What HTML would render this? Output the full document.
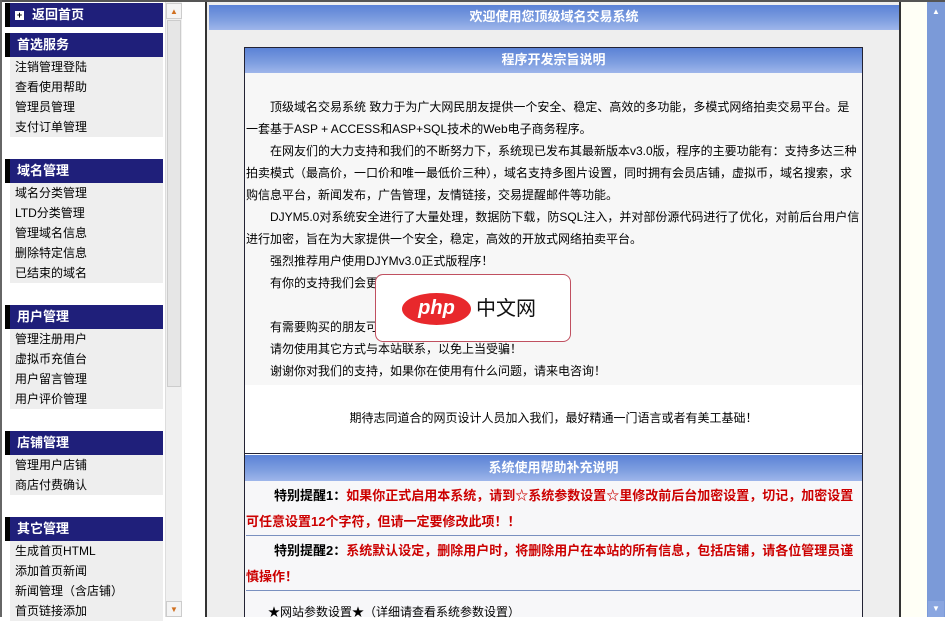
<!DOCTYPE html>
<html><head><meta charset="utf-8"><style>
*{margin:0;padding:0;box-sizing:border-box}
body{width:945px;height:617px;overflow:hidden;background:#fff;font-family:"Liberation Sans","Noto Sans CJK SC","WenQuanYi Zen Hei",sans-serif;font-size:12px;color:#000;position:relative}
.a{position:absolute}
.hd{position:absolute;left:5px;width:158px;height:24px;background:#1f1f7a;border-left:5px solid #000;color:#fff;font-weight:bold;font-size:13px;line-height:24px;padding-left:7px}
.it{position:absolute;left:10px;width:153px;background:#eeeeee;padding-left:5px}
.it div{height:20px;line-height:20px}
.grad{background:linear-gradient(#5b82d6,#7f9fe0 60%,#9fb6ea)}
.sb{position:absolute;width:16px;height:16px;font-size:8px;text-align:center;line-height:16px}
p{height:22px;line-height:22px;white-space:nowrap;overflow:hidden}
</style></head><body>
<div class="a" style="left:0;top:0;width:945px;height:2px;background:#555"></div>
<div class="a" style="left:0;top:0;width:2px;height:617px;background:#666"></div>
<div class="hd" style="top:3px;height:24px;padding-left:5px"><span style="display:inline-block;width:9px;height:9px;background:#fff;color:#000;font-size:9px;line-height:8px;text-align:center;margin-right:8px;vertical-align:1px">+</span>返回首页</div>
<div class="hd" style="top:33px">首选服务</div>
<div class="it" style="top:57px"><div>注销管理登陆</div><div>查看使用帮助</div><div>管理员管理</div><div>支付订单管理</div></div>
<div class="hd" style="top:159px">域名管理</div>
<div class="it" style="top:183px"><div>域名分类管理</div><div>LTD分类管理</div><div>管理域名信息</div><div>删除特定信息</div><div>已结束的域名</div></div>
<div class="hd" style="top:305px">用户管理</div>
<div class="it" style="top:329px"><div>管理注册用户</div><div>虚拟币充值台</div><div>用户留言管理</div><div>用户评价管理</div></div>
<div class="hd" style="top:431px">店铺管理</div>
<div class="it" style="top:455px"><div>管理用户店铺</div><div>商店付费确认</div></div>
<div class="hd" style="top:517px">其它管理</div>
<div class="it" style="top:541px"><div>生成首页HTML</div><div>添加首页新闻</div><div>新闻管理（含店铺）</div><div>首页链接添加</div></div>
<div class="a" style="left:165px;top:2px;width:17px;height:615px;background:#f0f0f0;border-left:1px solid #ddd"></div>
<div class="a" style="left:167px;top:20px;width:14px;height:367px;background:#e6e6e6;border:1px solid #ccc"></div>
<div class="sb" style="left:166px;top:3px;color:#d07020;background:#f4f4f4;border:1px solid #ccc">▲</div>
<div class="sb" style="left:166px;top:601px;color:#d07020;background:#f4f4f4;border:1px solid #ccc">▼</div>
<div class="a" style="left:205px;top:2px;width:2px;height:615px;background:#333"></div>
<div class="a" style="left:207px;top:2px;width:693px;height:615px;background:#eeeeee"></div>
<div class="a" style="left:899px;top:2px;width:2px;height:615px;background:#333"></div>
<div class="a grad" style="left:209px;top:5px;width:690px;height:25px;color:#fff;font-weight:bold;font-size:13px;text-align:center;line-height:24px">欢迎使用您顶级域名交易系统</div>
<div class="a" style="left:244px;top:47px;width:619px;height:570px;border:1px solid #223;background:#fff"></div>
<div class="a grad" style="left:245px;top:48px;width:617px;height:25px;color:#fff;font-weight:bold;font-size:13px;text-align:center;line-height:24px">程序开发宗旨说明</div>
<div class="a" style="left:245px;top:73px;width:617px;height:312px;background:#f7f7f7"></div>
<div class="a" style="left:246px;top:96px;width:614px;font-size:12px">
<p style="text-indent:24px">顶级域名交易系统 致力于为广大网民朋友提供一个安全、稳定、高效的多功能，多模式网络拍卖交易平台。是</p>
<p>一套基于ASP + ACCESS和ASP+SQL技术的Web电子商务程序。</p>
<p style="text-indent:24px">在网友们的大力支持和我们的不断努力下，系统现已发布其最新版本v3.0版，程序的主要功能有：支持多达三种</p>
<p>拍卖模式（最高价，一口价和唯一最低价三种），域名支持多图片设置，同时拥有会员店铺，虚拟币，域名搜索，求</p>
<p>购信息平台，新闻发布，广告管理，友情链接，交易提醒邮件等功能。</p>
<p style="text-indent:24px">DJYM5.0对系统安全进行了大量处理，数据防下载，防SQL注入，并对部份源代码进行了优化，对前后台用户信息</p>
<p>进行加密，旨在为大家提供一个安全，稳定，高效的开放式网络拍卖平台。</p>
<p style="text-indent:24px">强烈推荐用户使用DJYMv3.0正式版程序！</p>
<p style="text-indent:24px">有你的支持我们会更好！</p>
<p></p>
<p style="text-indent:24px">有需要购买的朋友可以联系 QQ / webmaster@djym.net</p>
<p style="text-indent:24px">请勿使用其它方式与本站联系，以免上当受骗！</p>
<p style="text-indent:24px">谢谢你对我们的支持，如果你在使用有什么问题，请来电咨询！</p>
</div>
<div class="a" style="left:245px;top:408px;width:617px;text-align:center;line-height:20px">期待志同道合的网页设计人员加入我们，最好精通一门语言或者有美工基础！</div>
<div class="a" style="left:245px;top:453px;width:617px;height:1px;background:#223"></div>
<div class="a grad" style="left:245px;top:455px;width:617px;height:26px;color:#fff;font-weight:bold;font-size:13px;text-align:center;line-height:25px">系统使用帮助补充说明</div>
<div class="a" style="left:245px;top:481px;width:617px;height:136px;background:#f7f7f9"></div>
<div class="a" style="left:246px;top:483px;width:614px;font-weight:bold;font-size:13px;line-height:26px">
<div style="text-indent:28px;height:53px;border-bottom:1px solid #7a90c0">特别提醒1：<span style="color:#c00">如果你正式启用本系统，请到☆系统参数设置☆里修改前后台加密设置，切记，加密设置可任意设置12个字符，但请一定要修改此项！！</span></div>
<div style="text-indent:28px;height:55px;border-bottom:1px solid #7a90c0;padding-top:2px">特别提醒2：<span style="color:#c00">系统默认设定，删除用户时，将删除用户在本站的所有信息，包括店铺，请各位管理员谨慎操作！</span></div>
<div style="text-indent:22px;font-weight:normal;font-size:12px;padding-top:8px">★网站参数设置★（详细请查看系统参数设置）</div>
</div>
<div class="a" style="left:901px;top:2px;width:26px;height:615px;background:#fffff6"></div>
<div class="a" style="left:927px;top:2px;width:18px;height:615px;background:#7b9ad8"></div>
<div class="sb" style="left:928px;top:4px;color:#fff">▲</div>
<div class="sb" style="left:928px;top:601px;color:#fff;background:#8aa6e0">▼</div>
<div class="a" style="left:375px;top:274px;width:196px;height:68px;background:#fff;border:1px solid #c05060;border-radius:8px"></div>
<div class="a" style="left:402px;top:293px;width:69px;height:32px;background:#e8282c;border-radius:50%;color:#fff;font-weight:bold;font-style:italic;font-size:20px;text-align:center;line-height:30px">php</div>
<div class="a" style="left:476px;top:296px;font-size:20px;line-height:26px;color:#111">中文网</div>
</body></html>
